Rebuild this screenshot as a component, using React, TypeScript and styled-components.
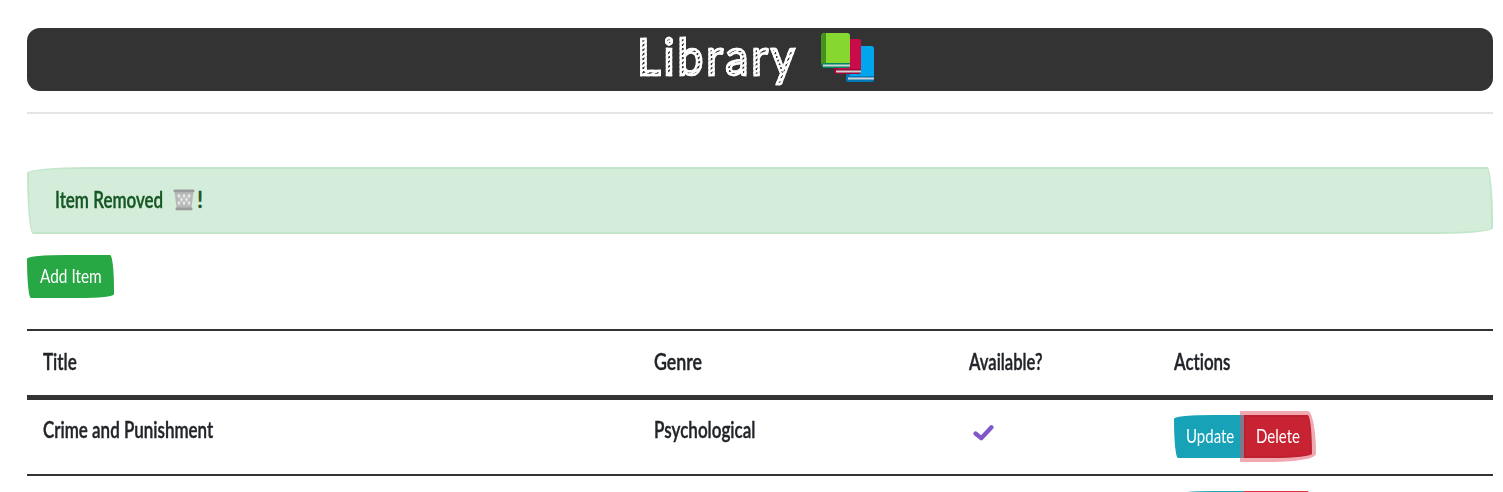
import React from "react";
import styled, { createGlobalStyle } from "styled-components";

const GlobalStyle = createGlobalStyle`
  *, *::before, *::after { box-sizing: border-box; }
  html, body { margin: 0; height: 492px; overflow: hidden; background: #fff; }
  body { color: #212529; font-family: Lato, "Open Sans", sans-serif; }
`;

const sketchRadius = "255px 25px 225px 25px / 25px 225px 25px 255px";

const Page = styled.main`
  height: 492px;
  overflow: hidden;
  padding: 28px 10px 0 27px;
`;

const Banner = styled.header`
  display: flex;
  justify-content: center;
  height: 63px;
  border-radius: 13px;
  background: #333;
`;

const Heading = styled.h1`
  display: flex;
  align-items: flex-start;
  width: 246px;
  margin: 0;
  font-size: 51px;
  line-height: 55px;
  font-weight: 400;
`;

const SketchWord = styled.span`
  flex: none;
  width: 182px;
  height: 63px;
  letter-spacing: 3.3px;
  white-space: nowrap;
  transform: scaleX(0.9);
  transform-origin: left;
  color: transparent;
  -webkit-text-stroke: 2.5px #fff;
  background: repeating-linear-gradient(152deg, #fff 0 1.4px, #333 1.8px 3.2px, #ddd 3.4px 4px);
  -webkit-background-clip: text;
  background-clip: text;
`;

const BooksIcon = styled.svg`
  flex: none;
  margin-top: 2px;
`;

const Rule = styled.hr`
  height: 2px;
  margin: 21px 0 53px;
  border: 0;
  background: #e5e5e5;
`;

const Script = styled.span<{ $scale?: number }>`
  display: inline-block;
  white-space: nowrap;
  font-variant-ligatures: none;
  transform: scaleX(${(p) => p.$scale ?? 0.78});
  transform-origin: left;
`;

const Alert = styled.div`
  display: flex;
  align-items: center;
  height: 67px;
  padding: 0 26px 2px;
  border: 2px solid #c3e6cb;
  border-radius: ${sketchRadius};
  background: #d4edda;
  color: #155724;
  font-size: 22px;
  font-weight: 600;
  -webkit-text-stroke: 0.4px currentColor;
`;

const AlertLabel = styled.span`
  width: 118px;
`;

const Mark = styled.span`
  margin-left: 2px;
`;

const Button = styled.button<{ $tone: string; $edge?: string; $width: number }>`
  display: block;
  width: ${(p) => p.$width}px;
  height: 43px;
  padding: 0 0 0 10px;
  border: 2px solid ${(p) => p.$edge ?? p.$tone};
  border-radius: ${sketchRadius};
  background: ${(p) => p.$tone};
  color: #fff;
  font: 400 19px/37px Lato, "Open Sans", sans-serif;
  text-align: left;

  & > span {
    display: block;
    height: 39px;
  }
`;

const AddButton = styled(Button)`
  margin: 21px 0 31px;
  padding-left: 11px;
`;

const ButtonGroup = styled.div`
  display: flex;
`;

const UpdateButton = styled(Button)`
  border-top-right-radius: 0;
  border-bottom-right-radius: 0;
`;

const DeleteButton = styled(Button)<{ $focused?: boolean }>`
  border-top-left-radius: 0;
  border-bottom-left-radius: 0;
  margin-left: -2px;
  box-shadow: ${(p) => (p.$focused ? "0 0 0 4px rgba(225, 83, 97, 0.5)" : "none")};
`;

const Table = styled.table`
  width: 100%;
  table-layout: fixed;
  border-collapse: separate;
  border-spacing: 0;
  font-size: 22px;
  font-weight: 600;
`;

const HeadCell = styled.th<{ $width: number }>`
  width: ${(p) => p.$width}px;
  height: 71px;
  padding: 0 16px 3px;
  border-top: 2px solid #333;
  border-bottom: 5px solid #333;
  text-align: left;
  font-weight: 600;
  -webkit-text-stroke: 0.4px currentColor;
`;

const Cell = styled.td`
  height: 76px;
  padding: 15px 16px 0;
  border-bottom: 2px solid #333;
  vertical-align: top;
  line-height: 30px;
`;

const BookText = styled(Script)`
  -webkit-text-stroke: 0.4px currentColor;
`;

const CheckIcon = styled.svg`
  display: block;
  margin: 8px 0 0 3px;
`;

const Books = () => (
  <BooksIcon width="58" height="54" viewBox="0 0 58 54" aria-hidden="true">
    <path d="M29 19q0-3 3-3h20q3 0 3 3v31q0 2-2 2H29q-2 0-2-3z" fill="#0078b8" />
    <path d="M31 16h21q3 0 3 3v27H31z" fill="#00a6ed" />
    <path d="M29 47.5h26v2H29z" fill="#d3d3d3" />
    <path d="M17 12q0-3 3-3h19q3 0 3 3v30q0 2-2 2H17q-2 0-2-3z" fill="#990838" />
    <path d="M19 9h20q3 0 3 3v27H19z" fill="#ca0b4a" />
    <path d="M17 40.5h25v2H17z" fill="#d3d3d3" />
    <path d="M2.500 6q0-3 3-3H28q3 0 3 3v30q0 2-2 2H5q-2.500 0-2.500-3z" fill="#008463" />
    <path d="M2.500 6q0-3 3-3H28q3 0 3 3v27H2.500z" fill="#86d72f" />
    <path d="M2.500 6q0-3 3-3H7v30q-3 0-4.500 2z" fill="#44911b" />
    <path d="M4 34.500h27v2H4z" fill="#d3d3d3" />
  </BooksIcon>
);

const Trash = () => (
  <svg width="22" height="22" viewBox="0 0 22 22" aria-hidden="true">
    <path d="M1.500 3h19l-2 16h-15z" fill="#b9b9b9" />
    <path
      d="M6 5l1.300 2L6 9 4.700 7zM11 5l1.300 2L11 9 9.700 7zM16 5l1.300 2L16 9l-1.300-2zM8.500 8.500l1.300 2-1.300 2-1.300-2zM13.500 8.500l1.300 2-1.300 2-1.300-2zM6 12l1.300 2L6 16l-1.300-2zM11 12l1.300 2-1.300 2-1.300-2zM16 12l1.300 2-1.300 2-1.300-2z"
      fill="#e4ebe6"
      stroke="#e4ebe6"
      strokeWidth="0.500"
    />
    <rect x="0.500" y="0.500" width="21" height="2.800" rx="1.200" fill="#9b9b9b" />
    <rect x="2.500" y="18.500" width="17" height="2.800" rx="1.200" fill="#9b9b9b" />
  </svg>
);

const Check = () => (
  <CheckIcon width="24" height="20" viewBox="0 0 24 20" aria-label="Available">
    <path d="M3.500 10.500 9.200 15.200 19.500 4.200" fill="none" stroke="#7e57c8" strokeWidth="4.300" strokeLinecap="round" strokeLinejoin="round" />
  </CheckIcon>
);

type ActionsProps = { focused?: boolean; labelled?: boolean };

const Actions = ({ focused, labelled }: ActionsProps) => (
  <ButtonGroup>
    <UpdateButton $tone="#17a2b8" $width={72} aria-label="Update">
      {labelled && <Script $scale={0.79}>Update</Script>}
    </UpdateButton>
    <DeleteButton
      aria-label="Delete"
      $focused={focused}
      $tone={focused ? "#c82333" : "#dc3545"}
      $edge={focused ? "#bd2130" : "#dc3545"}
      $width={68}
    >
      {labelled && <Script $scale={0.79}>Delete</Script>}
    </DeleteButton>
  </ButtonGroup>
);

export default function App() {
  return (
    <>
      <GlobalStyle />
      <Page>
        <Banner>
          <Heading>
            <SketchWord>Library</SketchWord>
            <Books />
          </Heading>
        </Banner>
        <Rule />
        <Alert>
          <AlertLabel>
            <Script $scale={0.772}>Item Removed</Script>
          </AlertLabel>
          <Trash />
          <Mark>!</Mark>
        </Alert>
        <AddButton $tone="#28a745" $width={87}>
          <Script $scale={0.81}>Add Item</Script>
        </AddButton>
        <Table>
          <thead>
            <tr>
              <HeadCell $width={611}><Script $scale={0.775}>Title</Script></HeadCell>
              <HeadCell $width={315}><Script $scale={0.81}>Genre</Script></HeadCell>
              <HeadCell $width={205}><Script $scale={0.757}>Available?</Script></HeadCell>
              <HeadCell $width={335}><Script $scale={0.77}>Actions</Script></HeadCell>
            </tr>
          </thead>
          <tbody>
            <tr>
              <Cell><BookText $scale={0.772}>Crime and Punishment</BookText></Cell>
              <Cell><BookText $scale={0.775}>Psychological</BookText></Cell>
              <Cell><Check /></Cell>
              <Cell><Actions focused labelled /></Cell>
            </tr>
            <tr>
              <Cell />
              <Cell />
              <Cell />
              <Cell><Actions /></Cell>
            </tr>
          </tbody>
        </Table>
      </Page>
    </>
  );
}
